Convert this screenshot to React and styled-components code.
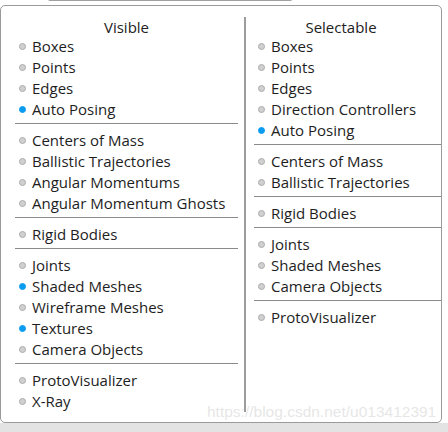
import React from "react";
import styled, { createGlobalStyle } from "styled-components";

const Global = createGlobalStyle`
  html, body { margin: 0; padding: 0; background: #ffffff; }
  body { font-family: "Open Sans", "Noto Sans", sans-serif; }
`;

const Page = styled.div`
  position: relative;
  width: 448px;
  height: 432px;
  overflow: hidden;
  background: #ffffff;
  display: flex;
  flex-direction: column;
`;

const TopTab = styled.div`
  margin-left: 48px;
  width: 242px;
  height: 1px;
  border: 1px solid #a0a0a0;
  border-top: none;
  border-radius: 0 0 4px 4px;
  margin-top: -1px;
`;

const Panel = styled.div`
  margin-top: 4px;
  width: 440px;
  height: 416px;
  border: 1px solid #9a9a9a;
  border-radius: 5px;
  background: #fff;
  display: grid;
  grid-template-columns: 243px 2px 1fr;
  box-sizing: content-box;
`;

const Footer = styled.div`
  flex: 1;
  background: #e3e3e3;
`;

const Column = styled.div`
  padding: ${(p) => p.$pad};
  display: flex;
  flex-direction: column;
`;

const Divider = styled.div`
  background: #9c9c9c;
  margin: 11px 0 10px;
`;

const Title = styled.div`
  font-size: 15px;
  line-height: 20px;
  margin: 2px 0 -2px;
  color: #222;
  text-align: center;
  padding-right: ${(p) => p.$shift || 0}px;
`;

const Item = styled.div`
  display: flex;
  align-items: center;
  height: 21px;
  padding-left: 4px;
  font-size: 15px;
  color: #1e1e1e;
  white-space: nowrap;
`;

const Dot = styled.span`
  width: 7px;
  height: 7px;
  border-radius: 50%;
  box-sizing: border-box;
  margin-right: 6px;
  margin-top: 1px;
  flex: none;
  background: ${(p) => (p.$on ? "#0b9cf2" : "#d0d0d0")};
  border: 1px solid ${(p) => (p.$on ? "#0b9cf2" : "#ababab")};
`;

const Sep = styled.div`
  height: 1px;
  background: #8a8a8a;
  margin: 4px 0 5px;
`;

const Watermark = styled.div`
  position: absolute;
  left: 207px;
  top: 403px;
  font-family: "Liberation Sans", Arial, sans-serif;
  font-size: 15.5px;
  color: rgba(205, 205, 205, 0.5);
  white-space: nowrap;
  pointer-events: none;
`;

const visible = [
  [["Boxes"], ["Points"], ["Edges"], ["Auto Posing", true]],
  [["Centers of Mass"], ["Ballistic Trajectories"], ["Angular Momentums"], ["Angular Momentum Ghosts"]],
  [["Rigid Bodies"]],
  [["Joints"], ["Shaded Meshes", true], ["Wireframe Meshes"], ["Textures", true], ["Camera Objects"]],
  [["ProtoVisualizer"], ["X-Ray"]],
];

const selectable = [
  [["Boxes"], ["Points"], ["Edges"], ["Direction Controllers"], ["Auto Posing", true]],
  [["Centers of Mass"], ["Ballistic Trajectories"]],
  [["Rigid Bodies"]],
  [["Joints"], ["Shaded Meshes"], ["Camera Objects"]],
  [["ProtoVisualizer"]],
];

function Groups({ groups }) {
  return groups.map((g, gi) => (
    <React.Fragment key={gi}>
      {gi > 0 && <Sep />}
      {g.map(([label, on]) => (
        <Item key={label}>
          <Dot $on={on} />
          {label}
        </Item>
      ))}
    </React.Fragment>
  ));
}

export default function App() {
  return (
    <Page>
      <Global />
      <TopTab />
      <Panel>
        <Column $pad="9px 6px 10px 14px">
          <Title>Visible</Title>
          <Groups groups={visible} />
        </Column>
        <Divider />
        <Column $pad="9px 0 10px 8px">
          <Title $shift={13}>Selectable</Title>
          <Groups groups={selectable} />
        </Column>
      </Panel>
      <Footer />
      <Watermark>https://blog.csdn.net/u013412391</Watermark>
    </Page>
  );
}
